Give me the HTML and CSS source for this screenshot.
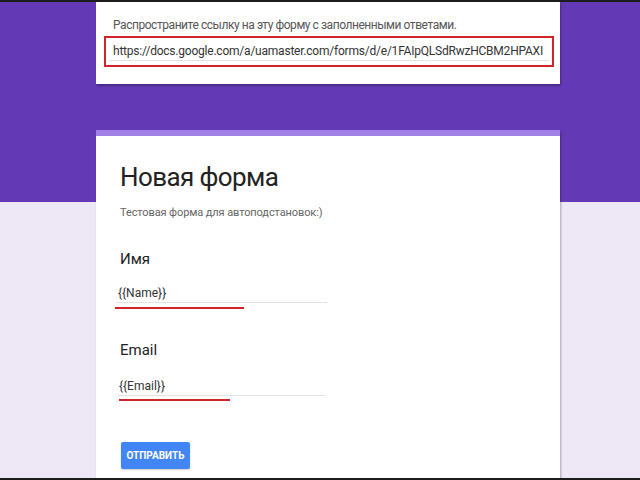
FILE: index.html
```html
<!DOCTYPE html>
<html lang="ru">
<head>
  <meta charset="UTF-8" />
  <meta name="viewport" content="width=device-width, initial-scale=1.0" />
  <title>Новая форма</title>
  <link rel="stylesheet" href="styles.css">
</head>
<body>
  <div class="page">
    <div class="column">
      <section class="card share">
        <p class="share-label">Распространите ссылку на эту форму с заполненными ответами.</p>
        <div class="share-link">
          <div class="link-field">https://docs.google.com/a/uamaster.com/forms/d/e/1FAIpQLSdRwzHCBM2HPAXI</div>
        </div>
      </section>

      <section class="card form">
        <h1>Новая форма</h1>
        <p class="desc">Тестовая форма для автоподстановок:)</p>

        <div class="question">
          <div class="q-title">Имя</div>
          <div class="answer">{{Name}}</div>
          <div class="mark mark-name"></div>
        </div>

        <div class="question question-email">
          <div class="q-title">Email</div>
          <div class="answer">{{Email}}</div>
          <div class="mark mark-email"></div>
        </div>

        <button class="submit">ОТПРАВИТЬ</button>
      </section>
    </div>
  </div>
</body>
</html>
```

FILE: styles.css
```css
html, body {
  margin: 0;
  padding: 0;
  overflow: hidden;
}
body {
  font-family: Roboto, "Liberation Sans", Arial, sans-serif;
  color: #202124;
}
.page {
  height: 476px;
  border-top: 2px solid #1c1c1c;
  border-bottom: 2px solid #1c1c1c;
  overflow: hidden;
  background: linear-gradient(#6439b5 0, #6439b5 200px, #ede7f6 200px);
}
.column {
  width: 464px;
  margin-left: 96px;
}
.card {
  background: #fff;
  box-shadow: 1px 2px 2px rgba(0, 0, 0, 0.28);
}
.share {
  padding: 14px 0 17px 17px;
}
.share-label {
  margin: 0;
  font-size: 12px;
  letter-spacing: -0.45px;
  line-height: 18px;
  color: #555;
}
.share-link {
  margin: 2px 0 0 -9px;
  border: 2px solid #d2232a;
  padding: 4px 3px 4px 3px;
  box-sizing: border-box;
  width: 450px;
}
.link-field {
  font-size: 12px;
  letter-spacing: -0.22px;
  line-height: 18px;
  color: #333;
  padding-left: 4px;
  white-space: nowrap;
  overflow: hidden;
  border-bottom: 1px solid #e4e4e4;
}
.form {
  margin-top: 46px;
  height: 400px;
  border-top: 6px solid #a07fe6;
  padding: 23px 24px 0 24px;
}
.form h1 {
  margin: 0;
  font-size: 26px;
  letter-spacing: -0.6px;
  line-height: 36px;
  font-weight: 400;
  color: #222;
}
.desc {
  margin: 10px 0 0 0;
  font-size: 11px;
  letter-spacing: -0.1px;
  line-height: 16px;
  color: #666;
}
.question {
  margin-top: 28px;
}
.question-email {
  margin-top: 31px;
}
.q-title {
  font-size: 15px;
  line-height: 20px;
  color: #222;
}
.answer {
  margin: 15px 0 0 -4px;
  width: 209px;
  padding-left: 2px;
  font-size: 12px;
  line-height: 18px;
  color: #333;
  border-bottom: 1px solid #e2e2e2;
}
.question-email .answer {
  margin-top: 17px;
  margin-left: -2px;
  width: 207px;
  padding-left: 1px;
}
.mark {
  height: 2px;
  background: #d2232a;
  margin-top: 4px;
}
.mark-name {
  margin-left: -5px;
  width: 129px;
}
.mark-email {
  margin-top: 3px;
  margin-left: -1px;
  width: 111px;
}
.submit {
  display: block;
  margin-top: 41px;
  margin-left: 1px;
  width: 69px;
  height: 27px;
  padding: 0;
  border: none;
  border-radius: 2px;
  background: #4285f4;
  color: #fff;
  font-family: Roboto, "Liberation Sans", Arial, sans-serif;
  font-size: 10px;
  font-weight: 700;
  box-shadow: 0 1px 2px rgba(0, 0, 0, 0.2);
}
```
